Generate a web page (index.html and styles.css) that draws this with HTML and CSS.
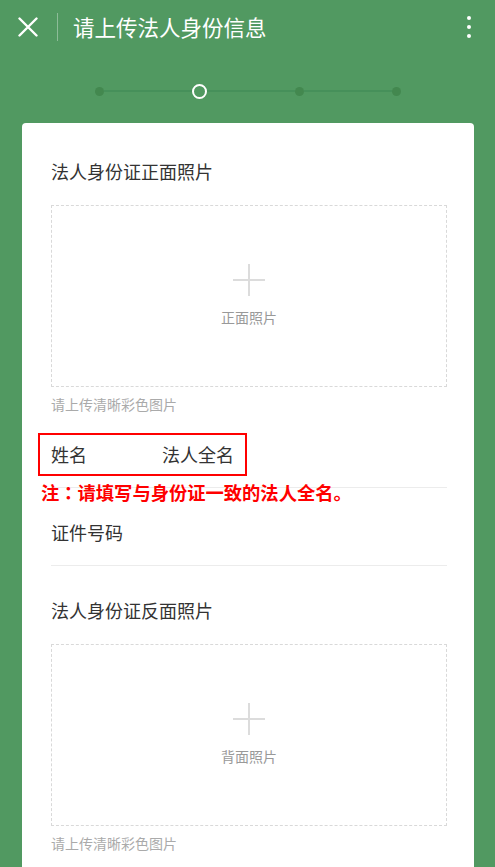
FILE: index.html
```html
<!DOCTYPE html>
<html lang="zh-CN">
<head>
<meta charset="utf-8">
<title>请上传法人身份信息</title>
<link rel="stylesheet" href="styles.css">
</head>
<body>
<header class="topbar">
  <svg class="close" width="20" height="20" viewBox="0 0 20 20"><path d="M1.5 1.5L18.5 18.5M18.5 1.5L1.5 18.5" stroke="#fff" stroke-width="2.4" stroke-linecap="round" fill="none"/></svg>
  <span class="divider"></span>
  <h1 class="title">请上传法人身份信息</h1>
  <span class="kebab"><i></i><i></i><i></i></span>
</header>

<div class="stepper">
  <span class="dot"></span><span class="seg"></span>
  <span class="ring"></span><span class="seg"></span>
  <span class="dot"></span><span class="seg"></span>
  <span class="dot"></span>
</div>

<main class="card">
  <section class="photo first">
    <h2 class="label">法人身份证正面照片</h2>
    <div class="upload">
      <span class="plus"></span>
      <span class="upload-text">正面照片</span>
    </div>
    <p class="hint">请上传清晰彩色图片</p>
  </section>

  <div class="row name-row">
    <span class="label">姓名</span>
    <span class="value">法人全名</span>
    <span class="mark-box"></span>
    <span class="mark-note">注<span class="colon" lang="zh-Hant">：</span>请填写与身份证一致的法人全名。</span>
  </div>

  <div class="row id-row">
    <span class="label">证件号码</span>
  </div>

  <section class="photo second">
    <h2 class="label">法人身份证反面照片</h2>
    <div class="upload">
      <span class="plus"></span>
      <span class="upload-text">背面照片</span>
    </div>
    <p class="hint">请上传清晰彩色图片</p>
  </section>
</main>
</body>
</html>
```

FILE: styles.css
```css
* { box-sizing: border-box; }
html, body { height: 100%; }
body {
  margin: 0;
  overflow: hidden;
  background: #519961;
  font-family: "Noto Sans CJK SC", "Noto Sans", sans-serif;
  color: #333;
}

.topbar {
  height: 54px;
  display: flex;
  align-items: center;
  padding: 0 24px 0 18px;
  color: #fff;
}
.close { display: block; flex: none; }
.divider {
  width: 1px;
  height: 28px;
  margin: 0 15px 0 19px;
  background: rgba(255,255,255,0.35);
}
.title {
  margin: 0;
  flex: 1;
  font-size: 21.5px;
  font-weight: normal;
  line-height: 28px;
  color: #fff;
}
.kebab {
  display: flex;
  flex-direction: column;
  gap: 5px;
}
.kebab i {
  display: block;
  width: 4px;
  height: 4px;
  border-radius: 50%;
  background: #fff;
}

.stepper {
  display: flex;
  align-items: center;
  width: 306px;
  height: 14px;
  margin: 30px auto 25px;
}
.seg {
  flex: 1;
  height: 2px;
  background: #46905a;
}
.dot {
  width: 9px;
  height: 9px;
  border-radius: 50%;
  background: #43884f;
  flex: none;
}
.ring {
  width: 15px;
  height: 15px;
  border-radius: 50%;
  border: 2.5px solid #fff;
  flex: none;
}

.card {
  margin: 0 21px 0 22px;
  background: #fff;
  border-radius: 4px 4px 0 0;
  padding: 36px 27px 60px 29px;
}

.label {
  margin: 0;
  font-size: 18px;
  font-weight: normal;
  line-height: 24px;
  color: #333;
}
.photo .label { margin-bottom: 22px; }
.second { padding-top: 32px; }

.upload {
  height: 182px;
  border: 1px dashed #d9d9d9;
  display: flex;
  flex-direction: column;
  align-items: center;
  padding-top: 58px;
}
.plus {
  position: relative;
  width: 32px;
  height: 32px;
  display: block;
}
.plus::before, .plus::after {
  content: "";
  position: absolute;
  background: #dcdcdc;
}
.plus::before { left: 15px; top: 0; width: 2px; height: 32px; }
.plus::after { top: 15px; left: 0; height: 2px; width: 32px; }
.upload-text {
  margin-top: 11px;
  font-size: 14px;
  line-height: 20px;
  color: #999;
}
.hint {
  margin: 7px 0 0;
  font-size: 14px;
  line-height: 20px;
  color: #aaa;
}

.row {
  display: flex;
  align-items: center;
  border-bottom: 1px solid #ececec;
}
.name-row {
  position: relative;
  padding: 28px 0 21px;
}
.name-row .value {
  margin-left: 75px;
  font-size: 18px;
  line-height: 24px;
  color: #333;
}
.id-row { padding: 32px 0 21px; }

.mark-box {
  position: absolute;
  left: -13px;
  top: 19px;
  width: 209px;
  height: 43px;
  border: 2px solid #f00;
}
.mark-note {
  position: absolute;
  left: -10px;
  top: 66px;
  font-size: 18.3px;
  line-height: 24px;
  font-weight: bold;
  color: #f00;
  white-space: nowrap;
}
.mark-note .colon {
  font-family: "Noto Sans CJK TC", "Noto Sans CJK SC", sans-serif;
}
```
